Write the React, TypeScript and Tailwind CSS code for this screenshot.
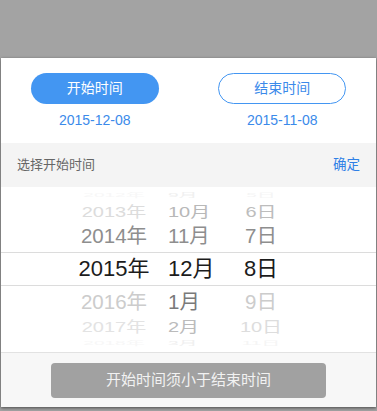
const rows = [
  {
    h: 'h-[17px]',
    scale: 'scale-y-[0.3]',
    size: 'text-[19px]',
    year: { t: '2012年', c: 'text-[#f7f7f7]' },
    month: { t: '9月', c: 'text-[#f0f0f0]' },
    day: { t: '5日', c: 'text-[#f5f5f5]' },
  },
  {
    h: 'h-[16px]',
    scale: 'scale-y-[0.75]',
    size: 'text-[20px]',
    year: { t: '2013年', c: 'text-[#dcdcdc]' },
    month: { t: '10月', c: 'text-[#b8b8b8]' },
    day: { t: '6日', c: 'text-[#bdbdbd]' },
  },
  {
    h: 'h-[32px]',
    scale: 'scale-y-[0.98]',
    size: 'text-[20.5px]',
    year: { t: '2014年', c: 'text-[#8e8e8e]' },
    month: { t: '11月', c: 'text-[#8e8e8e]' },
    day: { t: '7日', c: 'text-[#8e8e8e]' },
  },
  {
    h: 'h-[34px] border-y border-[#dcdcdc]',
    scale: 'scale-y-100',
    size: 'text-[22px]',
    year: { t: '2015年', c: 'text-[#1c1c1c]' },
    month: { t: '12月', c: 'text-[#1c1c1c]' },
    day: { t: '8日', c: 'text-[#1c1c1c]' },
  },
  {
    h: 'h-[33px]',
    scale: 'scale-y-[0.98]',
    size: 'text-[20.5px]',
    year: { t: '2016年', c: 'text-[#cccccc]' },
    month: { t: '1月', c: 'text-[#7a7a7a]' },
    day: { t: '9日', c: 'text-[#cccccc]' },
  },
  {
    h: 'h-[16px]',
    scale: 'scale-y-[0.75]',
    size: 'text-[20px]',
    year: { t: '2017年', c: 'text-[#e3e3e3]' },
    month: { t: '2月', c: 'text-[#bbbbbb]' },
    day: { t: '10日', c: 'text-[#dddddd]' },
  },
  {
    h: 'h-[17px]',
    scale: 'scale-y-[0.3]',
    size: 'text-[19px]',
    year: { t: '2018年', c: 'text-[#f7f7f7]' },
    month: { t: '3月', c: 'text-[#f0f0f0]' },
    day: { t: '11日', c: 'text-[#f5f5f5]' },
  },
];

export default function App() {
  return (
    <div
      className="w-[377px] h-[411px] bg-[#a3a3a3] overflow-hidden pt-[58px]"
      style={{ fontFamily: '"Liberation Sans", "Noto Sans CJK SC", sans-serif' }}
    >
      <div className="ml-[1px] w-[375px] h-[349px] bg-white flex flex-col shadow-[0_1px_3px_rgba(0,0,0,0.55)]">
        {/* start / end toggles */}
        <div className="flex pt-[15px]">
          <div className="flex-1 flex flex-col items-center">
            <button className="w-[128px] h-[31px] rounded-full bg-[#4396f2] text-white text-[14px]">
              开始时间
            </button>
            <div className="mt-[7px] leading-[18px] text-[14px] text-[#3b8aea]">2015-12-08</div>
          </div>
          <div className="flex-1 flex flex-col items-center">
            <button className="w-[128px] h-[31px] rounded-full border border-[#4396f2] bg-white text-[#3b8aea] text-[14px]">
              结束时间
            </button>
            <div className="mt-[7px] leading-[18px] text-[14px] text-[#3b8aea]">2015-11-08</div>
          </div>
        </div>

        {/* header */}
        <div className="mt-[14px] h-[44px] bg-[#f4f4f4] flex items-center justify-between px-[16px]">
          <span className="text-[13px] text-[#666666]">选择开始时间</span>
          <span className="text-[13.5px] text-[#2f80e6]">确定</span>
        </div>

        {/* wheel */}
        <div className="h-[165px] flex flex-col">
          {rows.map((r, i) => (
            <div key={i} className={`flex items-center pl-[63px] ${r.h}`}>
              <div className={`w-[100px] text-center leading-none ${r.size} ${r.scale} ${r.year.c}`}>{r.year.t}</div>
              <div className={`w-[73px] pl-[4px] leading-none ${r.size} ${r.scale} ${r.month.c}`}>{r.month.t}</div>
              <div className={`w-[48px] text-center leading-none ${r.size} ${r.scale} ${r.day.c}`}>{r.day.t}</div>
            </div>
          ))}
        </div>

        {/* footer */}
        <div className="flex-1 bg-[#f7f7f7] border-t border-[#e2e2e2] pt-[10px]">
          <button className="mx-auto flex items-center justify-center w-[275px] h-[35px] rounded-[4px] bg-[#a1a1a1] text-[15px] text-[#f2f2f2]">
            开始时间须小于结束时间
          </button>
        </div>
      </div>
    </div>
  );
}
